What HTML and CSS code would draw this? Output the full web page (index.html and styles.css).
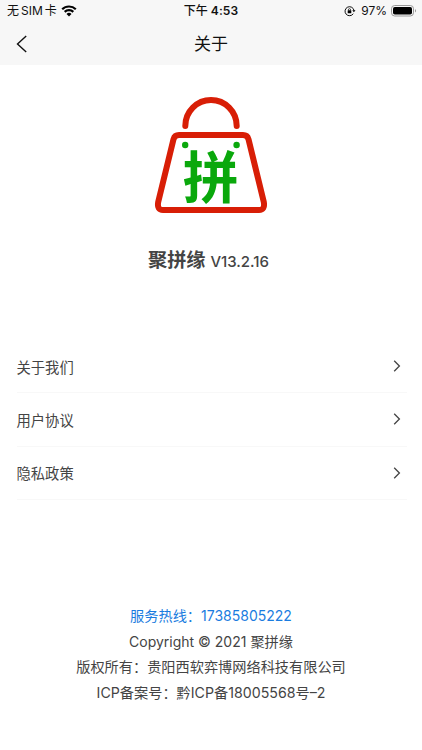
FILE: index.html
```html
<!DOCTYPE html>
<html lang="zh-CN">
<head>
    <meta charset="UTF-8">
    <meta name="viewport" content="width=device-width, initial-scale=1.0">
    <title>关于</title>
    <link rel="stylesheet" href="styles.css">
</head>
<body>
    <header class="header">
        <div class="status-bar">
            <div class="status-left">
                <span class="carrier">无<span class="sim">SIM</span>卡</span>
                <svg class="wifi" width="16" height="12" viewBox="0 0 16 12">
                    <path d="M1.2 4.3a9.7 9.7 0 0 1 13.6 0M3.7 6.9a6.1 6.1 0 0 1 8.6 0" fill="none" stroke="#000" stroke-width="2.2"/>
                    <path d="M5.5 8.9a3.6 3.6 0 0 1 5 0L8 11.4z"/>
                </svg>
            </div>
            <div class="status-time">下午<span class="clock">4:53</span></div>
            <div class="status-right">
                <svg width="12" height="12" viewBox="0 0 12 12">
                    <path d="M9.3 8.7A4.5 4.5 0 1 1 10 5.6" fill="none" stroke="#111" stroke-width="1"/>
                    <path d="M8.3 5.2h3.2L9.9 7.3z"/>
                    <rect x="3.7" y="5.3" width="3.6" height="3" rx=".4"/>
                    <path d="M4.4 5.5v-.7a1.1 1.1 0 0 1 2.2 0v.7" fill="none" stroke="#111" stroke-width=".8"/>
                </svg>
                <span class="percent">97%</span>
                <svg width="26" height="12" viewBox="0 0 26 12">
                    <rect x=".5" y=".5" width="22" height="10.5" rx="3.2" fill="none" stroke="#999"/>
                    <rect x="2" y="2" width="19" height="7.5" rx="1.8"/>
                    <path d="M24 4.2c1.4.4 1.4 2.8 0 3.2z" fill="#999"/>
                </svg>
            </div>
        </div>
        <div class="nav-bar">
            <svg class="back" width="12" height="18" viewBox="0 0 12 18">
                <path d="M10.2 1L1.5 9l8.7 8" fill="none" stroke="#111" stroke-width="1.4"/>
            </svg>
            <h1 class="title">关于</h1>
        </div>
    </header>

    <main>
        <div class="brand">
            <svg class="logo" width="116" height="120" viewBox="0 0 116 120">
                <g fill="none" stroke="#d81e06" stroke-width="6" stroke-linecap="round" stroke-linejoin="round">
                    <path d="M32.3 31a25.7 25.9 0 0 1 51.4 0"/>
                    <path d="M26 40h64q4.300 0 5.500 4.200l15.300 62.800q1.400 8-4.800 8H10q-6.200 0-4.800-8l15.300-62.800Q21.700 40 26 40z"/>
                </g>
                <g fill="#0aa80c">
                    <circle cx="32.200" cy="50" r="3.200"/>
                    <circle cx="83.600" cy="50" r="3.200"/>
                    <text class="logo-text" x="57.800" y="103" text-anchor="middle">拼</text>
                </g>
            </svg>
            <h2 class="app-name">聚拼缘 <span class="version">V13.2.16</span></h2>
        </div>

        <div class="menu">
            <div class="menu-item">
                <span>关于我们</span>
                <svg width="8" height="12" viewBox="0 0 8 12"><path d="M1.2.8L6.400 6l-5.200 5.200"/></svg>
            </div>
            <div class="menu-item">
                <span>用户协议</span>
                <svg width="8" height="12" viewBox="0 0 8 12"><path d="M1.2.8L6.400 6l-5.200 5.200"/></svg>
            </div>
            <div class="menu-item">
                <span>隐私政策</span>
                <svg width="8" height="12" viewBox="0 0 8 12"><path d="M1.2.8L6.400 6l-5.200 5.200"/></svg>
            </div>
        </div>
    </main>

    <footer class="footer">
        <p class="hotline">服务热线：<span class="phone">17385805222</span></p>
        <p class="copyright"><span class="year">Copyright © 2021</span> 聚拼缘</p>
        <p class="owner">版权所有：贵阳西软弈博网络科技有限公司</p>
        <p class="icp">ICP备案号：黔ICP备18005568号–2</p>
    </footer>
</body>
</html>
```
FILE: styles.css
```css
* {
    box-sizing: border-box;
    margin: 0;
    padding: 0;
}

body {
    font-family: Inter, "Noto Sans CJK SC", sans-serif;
    background: #fff;
    color: #444;
    height: 750px;
    overflow: hidden;
    display: flex;
    flex-direction: column;
}

svg {
    display: block;
    flex-shrink: 0;
}

.header {
    background: #f7f7f7;
    height: 65px;
    color: #111;
}

.status-bar {
    display: grid;
    grid-template-columns: 1fr auto 1fr;
    height: 22px;
    padding: 0 5px 0 7px;
    align-items: center;
    font-size: 12px;
    line-height: 22px;
}

.status-left,
.status-right {
    display: flex;
    align-items: center;
}

.status-left {
    gap: 4px;
}

.status-right {
    justify-content: flex-end;
    gap: 5px;
}

.percent {
    margin-right: -1px;
}

.sim {
    margin: 0 2px;
}

.status-time {
    font-weight: 500;
    margin-right: 2px;
}

.clock {
    font-weight: 600;
    margin-left: 3px;
    letter-spacing: 0.1px;
}

.nav-bar {
    display: grid;
    grid-template-columns: 1fr auto 1fr;
    align-items: center;
    height: 43px;
    padding: 0 16px;
}

.title {
    font-size: 17px;
    font-weight: 400;
    line-height: 24px;
}

.brand {
    display: flex;
    flex-direction: column;
    align-items: center;
    height: 275px;
    padding-top: 30px;
}

.logo-text {
    font-family: "Noto Sans CJK SC", sans-serif;
    font-size: 56px;
    font-weight: 700;
}

.app-name {
    margin-top: 31px;
    margin-right: 5px;
    font-size: 19.2px;
    font-weight: 600;
    line-height: 28px;
    white-space: nowrap;
}

.version {
    font-size: 15px;
    font-weight: 500;
}

.menu {
    padding: 0 15px 0 16.5px;
}

.menu-item {
    display: flex;
    align-items: center;
    justify-content: space-between;
    height: 53.3px;
    padding: 0 6px 0 0;
    border-bottom: 1px solid #f8f8f8;
    font-size: 14.3px;
}

.menu-item path {
    fill: none;
    stroke: #444;
    stroke-width: 1.3;
}

.footer {
    margin-top: auto;
    padding-bottom: 45px;
    text-align: center;
    font-size: 14.2px;
    line-height: 25.4px;
    white-space: nowrap;
}

.hotline {
    color: #1a7ce0;
}

.phone,
.year {
    font-size: 14px;
}
```
